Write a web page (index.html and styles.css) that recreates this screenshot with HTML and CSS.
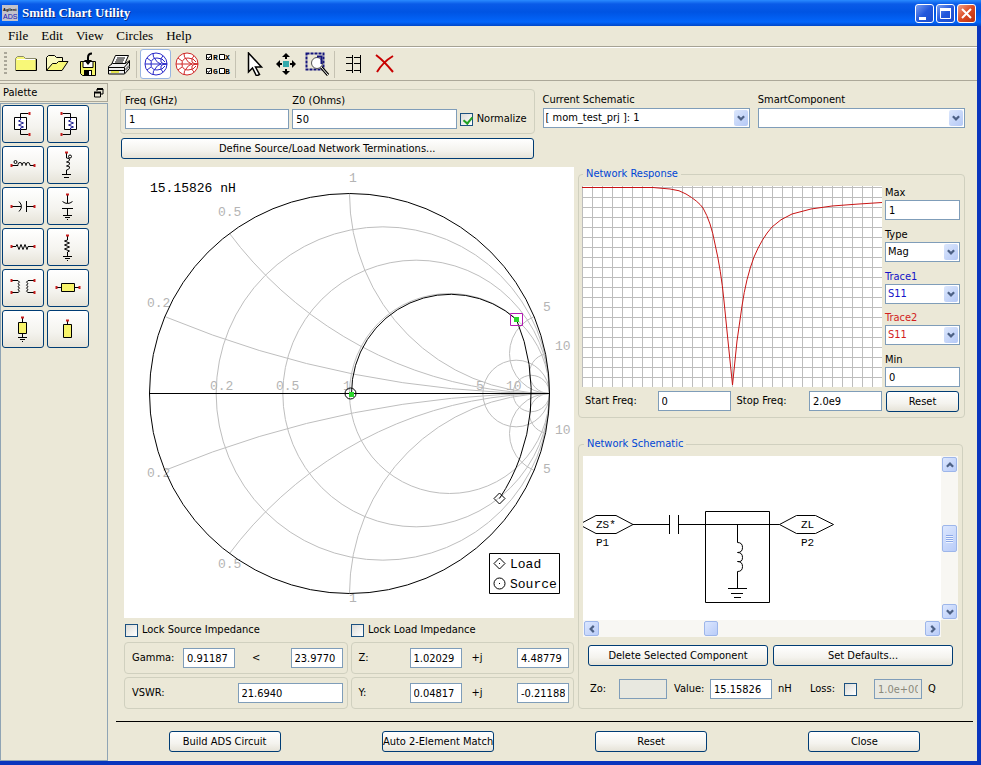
FILE: index.html
```html
<!DOCTYPE html>
<html lang="en">
<head>
<meta charset="utf-8">
<title>Smith Chart Utility</title>
<meta name="viewport" content="width=device-width, initial-scale=1.0">
<link rel="stylesheet" href="styles.css">
</head>
<body>

<!-- shared symbols -->
<svg class="defs" aria-hidden="true">
  <symbol id="down" viewBox="0 0 14 18"><path d="M3.500 7l3.500 3.500 3.500-3.500" fill="none" stroke="#4d6185" stroke-width="2.500"/></symbol>
  <symbol id="smith" viewBox="0 0 24 24">
    <g fill="none" stroke="currentColor">
      <circle cx="12" cy="12" r="11" fill="#fff"/>
      <path d="M1 12h22M9 1.500q0 4 2 5.500M9 22.500q0-4 2-5.500M3 6l4 3M3 18l4-3M19 4q-3 2-2 6 1 2 6 2M19 20q-3-2-2-6 1-2 6-2"/>
      <path d="M7 12q0-6 6-6t8 4M7 12q0 6 6 6t8-4M11 7q2 4 6 5-4 1-6 5"/>
    </g>
  </symbol>
</svg>

<header class="titlebar">
  <svg class="logo" width="16" height="16" viewBox="0 0 16 16"><rect width="16" height="16" fill="#c3c3cb"/><text x="1" y="6" font-size="4" font-weight="bold">Agilent</text><text class="ads" x="1" y="14" font-size="7">ADS</text></svg>
  <h1>Smith Chart Utility</h1>
  <div class="winbtns">
    <button type="button" aria-label="Minimize"><svg width="17" height="17"><path d="M3 12h7v3H3z" fill="#fff"/></svg></button>
    <button type="button" aria-label="Maximize"><svg width="17" height="17"><path d="M3.500 4v9.500h10V4" fill="none" stroke="#fff"/><path d="M3 3h11v3H3z" fill="#fff"/></svg></button>
    <button type="button" class="close" aria-label="Close window"><svg width="17" height="17"><path d="M4 4l9 9M13 4l-9 9" stroke="#fff" stroke-width="2"/></svg></button>
  </div>
</header>

<div class="frame">
<nav class="menu">
  <a href="#">File</a><a href="#">Edit</a><a href="#">View</a><a href="#">Circles</a><a href="#">Help</a>
</nav>

<div class="toolbar">
  <span class="grip"></span>
  <button type="button" aria-label="New"><svg width="24" height="24">
    <path d="M1.500 18.500v-12l2-2h6l2 2h10.500v12z" fill="#f8f878" stroke="#8a8a6a"/><path d="M2 18.500h20.500V7" fill="none" stroke="#000"/><path d="M3 7.500h18" stroke="#fff"/></svg></button>
  <button type="button" aria-label="Open"><svg width="24" height="24">
    <path d="M1.500 18.500v-13l2-2h6l2 2h6v4" fill="#fafac0" stroke="#000"/><path d="M1.500 18.500l6-7h4l2-2h9.500l-6 9z" fill="#f8f878" stroke="#000"/></svg></button>
  <button type="button" aria-label="Save"><svg width="24" height="24">
    <path d="M4.500 9.500h15v14h-13l-2-2z" fill="#f4f468" stroke="#000"/><path d="M7 9.500h10v6H7z" fill="#fff" stroke="#000"/><path d="M8 18h8v5H8z" fill="#000"/><path d="M13 19h2v4h-2z" fill="#fff"/><path d="M16 1.500q-4 0-4 4v4" fill="none" stroke="#000" stroke-width="2"/><path d="M8 8h8l-4 5z"/></svg></button>
  <button type="button" aria-label="Print"><svg width="24" height="24">
    <path d="M8.500 3.500h13l-4 9h-13z" fill="#fff" stroke="#000"/><path d="M10 6h8M9 8h8M8 10h8" stroke="#000"/><path d="M1.500 14.500l4-3h13l4-3v8l-5 5.500H1.500z" fill="#eee" stroke="#000"/><path d="M2 15.500h15.500v6M17.500 15l4.500-5M2 18.500h15" fill="none" stroke="#000"/><path d="M4 20h8" stroke="#e6e650" stroke-width="2"/><path d="M18.500 18l3.500-4" stroke="#888" stroke-width="2"/></svg></button>
  <span class="sep"></span>
  <button type="button" class="on blue" aria-label="Impedance chart"><svg width="24" height="24"><use href="#smith"/></svg></button>
  <button type="button" class="red" aria-label="Admittance chart"><svg width="24" height="24"><use href="#smith"/></svg></button>
  <button type="button" aria-label="Circle colours"><svg class="flags" width="26" height="24" viewBox="0 0 26 24">
    <g fill="#fff" stroke="#000"><path d="M1.500 2.500h5v5h-5zM14.500 2.500h5v5h-5zM1.500 16.500h5v5h-5zM14.500 16.500h5v5h-5z"/><path d="M2.500 5l1 1.500 2.500-3M2.500 19l1 1.500 2.500-3" fill="none"/></g>
    <text x="8" y="8">R</text><text x="20" y="8">X</text><text x="8" y="22">G</text><text x="20" y="22">B</text></svg></button>
  <span class="sep"></span>
  <button type="button" aria-label="Select"><svg width="24" height="24"><path d="M5.500 1v19l4-4 4 8 3-1.500-4-7.500h6z" fill="#fff" stroke="#000" stroke-width="1.500"/></svg></button>
  <button type="button" aria-label="Move"><svg width="24" height="24">
    <path d="M12 1l4 4h-3v2h-2V5H8zM12 23l4-4h-3v-2h-2v2H8zM2 12l4-4v3h2v2H6v3zM22 12l-4-4v3h-2v2h2v3z"/><path d="M9 9h6v6H9z" fill="#3aa"/></svg></button>
  <button type="button" aria-label="Zoom area"><svg width="24" height="24">
    <path d="M1.500 1.500h17v16h-17z" fill="none" stroke="#14147c" stroke-width="2" stroke-dasharray="3 1"/><path d="M16 15l7 8" stroke="#000" stroke-width="3"/><path d="M16 15l7 8" stroke="#fff"/><circle cx="12" cy="11" r="5.500" fill="#fff" stroke="#555"/><path d="M12 4.500h4.500V12" fill="none" stroke="#14147c" stroke-width="2"/></svg></button>
  <span class="sep"></span>
  <button type="button" aria-label="Table"><svg width="24" height="24"><path d="M4 5.500h6M12 5.500h7M4 11.500h6M12 11.500h7M4 18.500h6M12 18.500h7M10.500 3v18M18.500 3v18" stroke="#000"/></svg></button>
  <button type="button" aria-label="Delete"><svg width="24" height="24"><path d="M3 3q8 6 17 17M20 4Q10 10 4 20" fill="none" stroke="#c80000" stroke-width="2"/></svg></button>
</div>

<div class="body">
<aside class="palette">
  <h2>Palette <svg width="10" height="10"><path d="M3 1h6v5H7M3 1v2" fill="none" stroke="#000"/><path d="M3 1h6" stroke="#000" stroke-width="2"/><path d="M1 4.500h5.500v4.500H.5V4z" fill="none" stroke="#000"/><path d="M0 4.500h7" stroke="#000" stroke-width="2"/></svg></h2>
  <div class="parts">
    <button type="button" aria-label="Series impedance"><svg><path d="M13.500 9V5.500h8M13.500 22v4.500h8"/><path class="w" d="M7.500 9.500h12v12h-12z"/><path class="b" d="M13.500 10v2l-2 1 5 2-5 2 5 2-3 1v2"/><path class="r" d="M22.500 4v3M22.500 25v3"/></svg></button>
    <button type="button" aria-label="Shunt impedance"><svg><path d="M18.500 9V5.500h-8M18.500 22v4.500h-8"/><path class="w" d="M12.500 9.500h12v12h-12z"/><path class="b" d="M18.500 10v2l-2 1 5 2-5 2 5 2-3 1v2"/><path class="r" d="M9.500 4v3M9.500 25v3"/></svg></button>
    <button type="button" aria-label="Series inductor"><svg><path d="M5 16.500h6v-1q0-2 2-2t2 2v1q0-3 2-3t2 3q0-3 2-3t2 3h5"/><circle cx="8.500" cy="13" r="1.500"/><path class="r" d="M4.500 15v3M27.500 15v3"/></svg></button>
    <button type="button" aria-label="Shunt inductor"><svg><path d="M14.500 4v5q4 0 3 2t-3 2q4 0 3 2t-3 2q4 0 3 2t-3 2v4M10 25.500h9M12 28.500h5"/><circle cx="18" cy="7.500" r="1.500"/><path class="r" d="M13 3.500h3"/></svg></button>
    <button type="button" aria-label="Series capacitor"><svg><path d="M5 16.500h9M19.500 11v11M20 16.500h7M12 11.500q5 5 0 10"/><path class="r" d="M4.500 15v3M27.500 15v3"/></svg></button>
    <button type="button" aria-label="Shunt capacitor"><svg><path d="M15.500 4v9M10.500 11.500q5 4 10 0M10 18.500h11M15.500 18.500v7M11 25.500h9M13 27.500h5M15 29.500h1"/><path class="r" d="M14 4.500h3"/></svg></button>
    <button type="button" aria-label="Series resistor"><svg><path d="M5 15.500h4l1-2 2 5 2-5 2 5 2-5 2 5 1-3h6"/><path class="r" d="M4.500 14v3M27.500 14v3"/></svg></button>
    <button type="button" aria-label="Shunt resistor"><svg><path d="M15.500 4v5l-3 1 5 2-5 2 5 2-5 2 5 2-2 1v4M11 25.500h9M13 27.500h5M15 29.500h1"/><path class="r" d="M14 4.500h3"/></svg></button>
    <button type="button" aria-label="Transformer"><svg><path d="M5 8.500h6q3 2 0 3 3 2 0 3 3 2 0 3 3 2 0 3H5M27 8.500h-6q-3 2 0 3-3 2 0 3-3 2 0 3-3 2 0 3h6"/><path class="r" d="M4.500 7v3M4.500 19v3M27.500 7v3M27.500 19v3"/></svg></button>
    <button type="button" aria-label="Series line"><svg><path d="M5 15.500h22"/><path class="y" d="M9.500 11.500h13v8h-13z"/><path class="r" d="M4.500 14v3M27.500 14v3"/></svg></button>
    <button type="button" aria-label="Shorted stub"><svg><path d="M15.500 5v19M11 24.500h9M13 26.500h5M15 28.500h1"/><path class="y" d="M11.500 9.500h8v11h-8z"/><path class="r" d="M14 4.500h3"/></svg></button>
    <button type="button" aria-label="Open stub"><svg><path d="M15.500 7v8"/><path class="y" d="M11.500 11.500h8v13h-8z"/><path class="r" d="M14 7.500h3"/></svg></button>
  </div>
</aside>

<main>
  <div class="top">
    <div>
      <div class="group freq">
        <div class="field"><label for="freq">Freq (GHz)</label><input type="text" id="freq" value="1"></div>
        <div class="field"><label for="z0">Z0 (Ohms)</label><input type="text" id="z0" value="50"></div>
        <label class="check"><input type="checkbox" checked> Normalize</label>
      </div>
      <button type="button" class="btn define">Define Source/Load Network Terminations...</button>
    </div>
    <div class="field pick"><label for="sch">Current Schematic</label>
      <span class="combo"><select id="sch"><option>[ mom_test_prj ]: 1</option></select><svg><use href="#down"/></svg></span></div>
    <div class="field pick"><label for="smart">SmartComponent</label>
      <span class="combo"><select id="smart"><option></option></select><svg><use href="#down"/></svg></span></div>
  </div>

  <div class="work">
    <section class="left">
      <svg class="chart" viewBox="0 0 450 451">
        <clipPath id="rim"><circle cx="225.500" cy="226.500" r="200"/></clipPath>
        <!-- constant resistance: r = 0.2, 0.5, 1, 5, 10 -->
        <g class="grid">
          <circle cx="258.830" cy="226.500" r="166.670"/>
          <circle cx="292.170" cy="226.500" r="133.330"/>
          <circle cx="325.500" cy="226.500" r="100"/>
          <circle cx="392.170" cy="226.500" r="33.330"/>
          <circle cx="407.320" cy="226.500" r="18.180"/>
        </g>
        <!-- constant reactance: x = 0.2, 0.5, 1, 5, 10, both signs -->
        <g class="grid" clip-path="url(#rim)">
          <circle cx="425.500" cy="-773.500" r="1000"/><circle cx="425.500" cy="1226.500" r="1000"/>
          <circle cx="425.500" cy="-173.500" r="400"/><circle cx="425.500" cy="626.500" r="400"/>
          <circle cx="425.500" cy="26.500" r="200"/><circle cx="425.500" cy="426.500" r="200"/>
          <circle cx="425.500" cy="186.500" r="40"/><circle cx="425.500" cy="266.500" r="40"/>
          <circle cx="425.500" cy="206.500" r="20"/><circle cx="425.500" cy="246.500" r="20"/>
        </g>
        <g class="scale">
          <text x="225" y="15">1</text><text x="94" y="49">0.5</text><text x="23" y="140">0.2</text>
          <text x="419" y="144">5</text><text x="431" y="183">10</text><text x="431" y="267">10</text>
          <text x="419" y="306">5</text><text x="225" y="435">1</text><text x="94" y="401">0.5</text><text x="23" y="310">0.2</text>
          <text x="86" y="223">0.2</text><text x="152" y="223">0.5</text><text x="219" y="223">1</text>
          <text x="352" y="223">5</text><text x="382" y="223">10</text>
        </g>
        <g class="ink">
          <circle cx="225.500" cy="226.500" r="200"/>
          <path d="M25 226.500h401"/>
          <path d="M227.500 226.500A99 99 0 0 1 392.500 152.500A191 191 0 0 1 375.500 331.500"/>
          <path d="M375.500 326l5.500 5.500-5.500 5.500-5.500-5.500z"/>
          <circle cx="226.500" cy="226.500" r="5.500"/>
        </g>
        <path d="M225 225h5v5h-5zM390 150h5v5h-5z" fill="#2bd62b"/>
        <path d="M386.500 146.500h12v12h-12z" fill="none" stroke="#b31ab3"/>
        <text x="26" y="25">15.15826 nH</text>
        <path d="M365.500 386.500h70v40h-70z" fill="#fff" stroke="#000"/>
        <g class="ink">
          <path d="M375.500 391l5.500 5.500-5.500 5.500-5.500-5.500z"/><circle cx="375.500" cy="416.500" r="5.500"/>
          <path d="M375 396.500h1M375 416.500h1"/>
        </g>
        <text x="386" y="401">Load</text><text x="386" y="421">Source</text>
      </svg>

      <div class="locks">
        <label class="check"><input type="checkbox"> Lock Source Impedance</label>
        <label class="check"><input type="checkbox"> Lock Load Impedance</label>
      </div>
      <div class="values">
        <div class="group"><label for="gmag">Gamma:</label><input type="text" id="gmag" value="0.91187"><span class="op">&lt;</span><input type="text" aria-label="Gamma angle" value="23.9770"></div>
        <div class="group imp"><label for="zre">Z:</label><input type="text" id="zre" value="1.02029"><span class="op">+j</span><input type="text" aria-label="Z imaginary" value="4.48779"></div>
        <div class="group"><label for="vswr">VSWR:</label><input type="text" id="vswr" class="wide" value="21.6940"></div>
        <div class="group imp"><label for="yre">Y:</label><input type="text" id="yre" value="0.04817"><span class="op">+j</span><input type="text" aria-label="Y imaginary" value="-0.21188"></div>
      </div>
    </section>

    <section class="right">
      <fieldset class="response"><legend>Network Response</legend>
        <svg class="plot" viewBox="0 0 300 201" preserveAspectRatio="none">
          <pattern id="mesh" width="10" height="10" patternUnits="userSpaceOnUse"><path d="M.5 0v10M0 1.500h10" stroke="#bdbdbd"/></pattern>
          <rect width="300" height="201" fill="#fff"/><rect width="300" height="201" fill="url(#mesh)"/>
          <path d="M0 1.500H71L88 3Q98 4 104 8Q116 15 121 22Q129 36 133 58Q139 84 142 115L146 155L150.500 199L155 155L160 120Q164 92 172 71Q180 52 190 41Q198 33 210 28Q228 22 250 20Q275 18 300 16.500" fill="none" stroke="#c81414"/>
        </svg>
        <div class="side">
          <div class="field"><label for="max">Max</label><input type="text" id="max" value="1"></div>
          <div class="field"><label for="type">Type</label><span class="combo"><select id="type"><option>Mag</option></select><svg><use href="#down"/></svg></span></div>
          <div class="field trace1"><label for="t1">Trace1</label><span class="combo"><select id="t1"><option>S11</option></select><svg><use href="#down"/></svg></span></div>
          <div class="field trace2"><label for="t2">Trace2</label><span class="combo"><select id="t2"><option>S11</option></select><svg><use href="#down"/></svg></span></div>
          <div class="field"><label for="min">Min</label><input type="text" id="min" value="0"></div>
        </div>
        <div class="range">
          <label for="start">Start Freq:</label><input type="text" id="start" value="0">
          <label for="stop">Stop Freq:</label><input type="text" id="stop" value="2.0e9">
        </div>
        <button type="button" class="btn">Reset</button>
      </fieldset>

      <fieldset class="schematic"><legend>Network Schematic</legend>
        <div class="view">
          <svg class="circuit" width="358" height="164">
            <g class="ink">
              <path d="M-4 68.500l17-9h20l17 9-17 9H13zM50 68.500h36.500M86.500 59v19M95.500 59v19M95.500 68.500h101M196.500 68.500l17-9h19l18 9-18 9h-19z"/>
              <path d="M122.500 55.500h64v91h-64zM154.500 68.500v18q5 0 5 5t-5 5q5 0 5 5t-5 4q5 0 5 5t-5 5v17M145 132.500h19M148 137.500h12M151 141.500h7"/>
            </g>
            <text x="13" y="72">ZS*</text><text x="13" y="90">P1</text><text x="218" y="72">ZL</text><text x="218" y="90">P2</text>
          </svg>
          <div class="sb vert">
            <button type="button" aria-label="Scroll up"><svg class="up"><use href="#down"/></svg></button>
            <span class="thumb"></span>
            <button type="button" aria-label="Scroll down"><svg><use href="#down"/></svg></button>
          </div>
          <div class="sb horz">
            <button type="button" aria-label="Scroll left"><svg class="lt"><use href="#down"/></svg></button>
            <span class="thumb"></span>
            <button type="button" aria-label="Scroll right"><svg class="rt"><use href="#down"/></svg></button>
          </div>
        </div>
        <div class="pair">
          <button type="button" class="btn">Delete Selected Component</button>
          <button type="button" class="btn">Set Defaults...</button>
        </div>
        <div class="params">
          <label class="zo" for="zo">Zo:</label><input type="text" id="zo" disabled>
          <label class="val" for="val">Value:</label><input type="text" id="val" class="mid" value="15.15826"><span class="unit">nH</span>
          <label class="loss" for="loss">Loss:</label><input type="checkbox" id="loss"><input type="text" class="q" aria-label="Q" value="1.0e+009" disabled><span>Q</span>
        </div>
      </fieldset>
    </section>
  </div>

  <footer class="actions">
    <button type="button" class="btn">Build ADS Circuit</button>
    <button type="button" class="btn">Auto 2-Element Match</button>
    <button type="button" class="btn">Reset</button>
    <button type="button" class="btn">Close</button>
  </footer>
</main>
</div>
</div>

</body>
</html>
```
FILE: styles.css
```css
:root {
	--face: #ebe8d7;
	--edge: #7f9db9;
	--ui: "DejaVu Sans Condensed", "Noto Sans", sans-serif;
}
* { box-sizing: border-box; }
body {
	margin: 0;
	min-height: 100vh;
	display: flex;
	flex-direction: column;
	background: var(--face);
	font: 11px/14px var(--ui);
	color: #000;
}
button, input, select { font: inherit; color: inherit; margin: 0; }
svg { display: block; }
.defs { position: absolute; width: 0; height: 0; }

/* window */
.titlebar {
	display: flex;
	align-items: center;
	height: 26px;
	padding: 0 5px 0 2px;
	background: linear-gradient(#2a8bff 0, #0a5be8 4px, #0054e3 12px, #0366fb 22px, #0047c8 26px);
}
.titlebar h1 {
	flex: 1;
	margin: 0 0 0 4px;
	font: bold 13px/20px "Liberation Serif", serif;
	color: #fff;
	text-shadow: 1px 1px #0a2a80;
}
.logo text { font-family: "Liberation Sans", sans-serif; }
.logo .ads { fill: #1414b4; }
.winbtns { display: flex; gap: 2px; }
.winbtns button {
	width: 19px;
	height: 19px;
	padding: 0;
	border: 1px solid #fff;
	border-radius: 3px;
	background: linear-gradient(135deg, #7a9df0, #2358dc 50%, #1c4ccc);
}
.winbtns .close { background: linear-gradient(135deg, #f0a088, #dc4a22 50%, #b83010); }
.frame {
	flex: 1;
	display: flex;
	flex-direction: column;
	border: solid #0a35bd;
	border-width: 0 4px 4px 0;
}
.menu {
	display: flex;
	gap: 13px;
	height: 21px;
	padding: 0 8px;
	border-bottom: 1px solid #a5a294;
	font: 13px/20px "Liberation Serif", serif;
}
.menu a { color: #000; text-decoration: none; }

.toolbar {
	display: flex;
	align-items: center;
	height: 34px;
	border-top: 1px solid #fff;
	border-bottom: 1px solid #aca899;
}
.toolbar button {
	display: flex;
	align-items: center;
	justify-content: center;
	width: 31px;
	height: 30px;
	padding: 0;
	border: 1px solid transparent;
	border-radius: 3px;
	background: none;
}
.toolbar .on { background: #fff; border-color: #98b5e2; }
.toolbar .blue { color: #2828c8; }
.toolbar .red { color: #d02828; }
.grip {
	width: 3px;
	height: 24px;
	margin: 0 3px 0 4px;
	background: repeating-linear-gradient(#aaa799 0 2px, transparent 2px 4px);
}
.sep { width: 1px; height: 27px; margin: 0 3px 0 2px; background: #c5c2b2; }
.flags { flex: none; }
.flags text { font: bold 8px "Liberation Mono", monospace; fill: #000; }

.body { flex: 1; display: flex; }

/* palette dock */
.palette {
	width: 108px;
	display: flex;
	flex-direction: column;
	padding-top: 2px;
}
.palette h2 {
	display: flex;
	align-items: center;
	justify-content: space-between;
	height: 19px;
	margin: 0 0 1px;
	padding: 0 3px;
	border: solid #aca899;
	border-width: 1px 1px 1px 0;
	font: 11px/14px var(--ui);
}
.parts {
	flex: 1;
	display: grid;
	grid-template-columns: 42px 42px;
	grid-auto-rows: 38px;
	gap: 3px;
	padding: 1px;
	border: 1px solid #8fa4b4;
	align-content: start;
}
.parts button, .btn {
	border: 1px solid #003c74;
	border-radius: 3px;
	background: linear-gradient(#fff, #f4f3ee 60%, #e6e3d8);
	padding: 0;
}
.parts button { display: flex; align-items: center; justify-content: center; }
.parts svg { width: 32px; height: 32px; fill: none; stroke: #000; }
.parts .w { fill: #fff; }
.parts .b { stroke: #1a1a8c; }
.parts .r { stroke: #c81e1e; stroke-width: 2; }
.parts .y { fill: #f8f46a; }

/* controls */
.btn { height: 21px; text-align: center; line-height: 18px; white-space: nowrap; }
input[type=text] {
	min-width: 0;
	height: 20px;
	padding: 0 3px;
	border: 1px solid var(--edge);
	background: #fff;
}
input[type=text]:disabled { background: #e8e8e0; color: #8a887c; }
input[type=checkbox] {
	appearance: none;
	flex: none;
	width: 13px;
	height: 13px;
	border: 1px solid #1c5180;
	background: linear-gradient(135deg, #dcdcd7, #fff);
}
input[type=checkbox]:checked::after {
	content: "";
	display: block;
	width: 4px;
	height: 7px;
	margin: 1px 4px;
	border: solid #21a121;
	border-width: 0 2px 2px 0;
	transform: rotate(40deg);
}
.check { display: flex; align-items: center; gap: 4px; white-space: nowrap; }
.field { display: flex; flex-direction: column; min-width: 0; }
.field label { height: 15px; }
.combo { position: relative; display: block; }
.combo select {
	appearance: none;
	display: block;
	width: 100%;
	height: 20px;
	padding: 0 18px 0 2px;
	border: 1px solid var(--edge);
	border-radius: 0;
	background: #fff;
}
.combo svg {
	position: absolute;
	top: 2px;
	right: 2px;
	width: 14px;
	height: 16px;
	border-radius: 2px;
	background: linear-gradient(135deg, #dce7fc, #b4c8f6);
	pointer-events: none;
}
.group, fieldset {
	border: 1px solid #d0d0bf;
	border-radius: 4px;
}
fieldset { min-width: 0; margin: 0; }
legend { margin-left: 1px; padding: 0 3px; height: 14px; color: #0046d5; }

/* main area */
main { flex: 1; min-width: 0; padding-top: 8px; }
.top {
	display: grid;
	grid-template-columns: 2fr 1fr 1fr;
	gap: 8px;
	padding: 0 12px;
}
.freq {
	display: flex;
	align-items: flex-end;
	gap: 3px;
	padding: 4px;
}
.freq .field { flex: 1; }
.freq .check { height: 20px; padding-right: 3px; }
.define { display: block; width: calc(100% - 2px); margin: 4px 1px 0; }
.pick { padding-top: 4px; }

.work {
	display: grid;
	grid-template-columns: 450fr 387fr;
	gap: 4px;
	padding: 8px 12px 0 16px;
}
.left { min-width: 0; }
.chart { width: 100%; background: #fff; font: 13px "Liberation Mono", monospace; }
.grid { fill: none; stroke: #bebebe; }
.scale { fill: #b4b4b4; }
.ink { fill: none; stroke: #000; }

.locks, .values { display: grid; grid-template-columns: 1fr 1fr; column-gap: 3px; }
.locks { padding: 5px 0 5px 1px; }
.values { row-gap: 3px; }
.values .group {
	display: flex;
	align-items: center;
	height: 32px;
	padding: 0 4px 0 7px;
}
.values input { width: 52px; }
.values label { width: 51px; }
.values .op { flex: 1; padding-left: 17px; }
.values .imp .op { padding-left: 10px; }
.values .wide { width: 105px; margin-left: auto; }

.right { display: flex; flex-direction: column; gap: 19px; }
.response {
	display: grid;
	grid-template-columns: 1fr 75px;
	gap: 4px 3px;
	padding: 5px 4px 5px 3px;
}
.plot { width: 100%; height: 201px; }
.side { display: flex; flex-direction: column; justify-content: space-between; }
.side .field label { height: 14px; }
.trace1 { color: #1414c8; }
.trace2 { color: #d21e1e; }
.range { display: flex; align-items: center; height: 20px; padding-left: 3px; }
.range label { flex: 1; white-space: nowrap; }
.range input { width: 73px; }
.range input + label { padding-left: 6px; }
.response .btn { margin: 0 1px; }

.schematic { margin-right: 2px; padding: 5px 4px 9px; }
.view { display: grid; grid-template-columns: 1fr 17px; grid-template-rows: 164px 17px; }
.circuit { width: 100%; background: #fff; font: 11px "Liberation Mono", monospace; }
.sb { display: flex; background: #f8f7f3; }
.vert { flex-direction: column; align-items: center; padding: 1px 0; }
.sb button, .thumb {
	display: flex;
	align-items: center;
	justify-content: center;
	width: 15px;
	height: 15px;
	padding: 0;
	border: 1px solid #9db6ea;
	border-radius: 2px;
	background: linear-gradient(135deg, #dce7fe, #b9ccf8);
}
.sb svg { width: 14px; height: 16px; flex: none; }
.up { transform: rotate(180deg); }
.lt { transform: rotate(90deg); }
.rt { transform: rotate(-90deg); }
.vert .thumb { height: 27px; margin: 53px 0 auto; }
.vert .thumb::before {
	content: "";
	width: 7px;
	height: 8px;
	background: repeating-linear-gradient(#8ca8e8 0 1px, #eef4fe 1px 2px);
}
.horz { align-items: center; padding: 0 1px; }
.horz .thumb { margin: 0 auto 0 105px; width: 14px; }

.pair { display: grid; grid-template-columns: 1fr 1fr; gap: 5px; padding: 8px 5px 0; }
.params { display: flex; align-items: center; padding: 13px 0 0 7px; white-space: nowrap; }
.params input[type=text] { flex: none; width: 48px; }
.params input.mid[type=text] { width: 62px; }
.zo { width: 29px; }
.val { width: 43px; padding-left: 7px; }
.unit { width: 38px; padding-left: 6px; }
.loss { width: 34px; }
.params .q { margin: 0 6px 0 17px; }

.actions {
	display: grid;
	grid-template-columns: repeat(4, 1fr);
	justify-items: center;
	margin: 12px 4px 0 8px;
	padding: 9px 2px;
	border-top: 1px solid #000;
}
.actions .btn { width: 112px; }
```
